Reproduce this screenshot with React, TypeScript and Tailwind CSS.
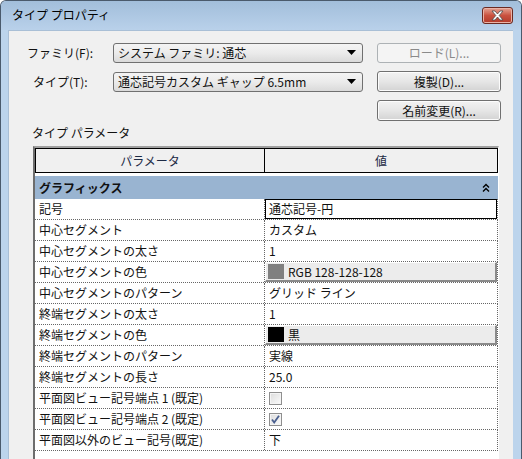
import React from 'react';

type Row = {
  name: string;
  value?: string;
  kind?: 'edit' | 'color' | 'check';
  swatch?: string;
  checked?: boolean;
};

const ROWS: Row[] = [
  { name: '記号', value: '通芯記号-円', kind: 'edit' },
  { name: '中心セグメント', value: 'カスタム' },
  { name: '中心セグメントの太さ', value: '1' },
  { name: '中心セグメントの色', value: 'RGB 128-128-128', kind: 'color', swatch: 'bg-[#808080]' },
  { name: '中心セグメントのパターン', value: 'グリッド ライン' },
  { name: '終端セグメントの太さ', value: '1' },
  { name: '終端セグメントの色', value: '黒', kind: 'color', swatch: 'bg-black' },
  { name: '終端セグメントのパターン', value: '実線' },
  { name: '終端セグメントの長さ', value: '25.0' },
  { name: '平面図ビュー記号端点 1 (既定)', kind: 'check', checked: false },
  { name: '平面図ビュー記号端点 2 (既定)', kind: 'check', checked: true },
  { name: '平面図以外のビュー記号(既定)', value: '下' },
];

function Combo({ text }: { text: string }) {
  return (
    <div className="flex h-[20px] w-[250px] items-center justify-between rounded-[3px] border border-[#707070] bg-gradient-to-b from-[#f4f4f4] via-[#ebebeb] to-[#dadada] pl-[4px] pr-[6px]">
      <span className="whitespace-nowrap">{text}</span>
      <svg width="9" height="5" viewBox="0 0 9 5">
        <path d="M0 0h9L4.5 5z" fill="#000" />
      </svg>
    </div>
  );
}

function Button({ text, disabled }: { text: string; disabled?: boolean }) {
  return (
    <div
      className={
        disabled
          ? 'flex h-[20px] w-[124px] items-center justify-center rounded-[3px] border border-[#adb2b5] bg-[#f4f4f4] text-[#8a8a8a]'
          : 'flex h-[21px] w-[124px] items-center justify-center rounded-[3px] border border-[#707070] bg-gradient-to-b from-[#f2f2f2] via-[#e6e6e6] to-[#d3d3d3] shadow-[inset_0_0_0_1px_#fcfcfc]'
      }
    >
      {text}
    </div>
  );
}

function Checkbox({ checked }: { checked?: boolean }) {
  return (
    <div className="flex h-[13px] w-[13px] items-center justify-center border border-[#8f8f8f] bg-gradient-to-br from-[#dcdcdc] to-[#fbfbfb] shadow-[inset_0_0_0_1px_#f4f4f4]">
      {checked && (
        <svg width="9" height="9" viewBox="0 0 9 9">
          <path d="M1 4.5l2.2 3L8 0.8" fill="none" stroke="#4a5f8f" strokeWidth="1.8" />
        </svg>
      )}
    </div>
  );
}

function ValueCell({ row }: { row: Row }) {
  if (row.kind === 'edit') {
    return (
      <div className="flex h-full flex-1 items-center border border-black pl-[3px]">{row.value}</div>
    );
  }
  if (row.kind === 'color') {
    return (
      <div className="flex h-full flex-1 items-center gap-[4px] border-b-2 border-r-2 border-l border-t border-b-[#8a8a8a] border-r-[#8a8a8a] border-l-white border-t-white bg-[#ececec] pl-[2px]">
        <span className={`h-[15px] w-[16px] ${row.swatch}`} />
        <span>{row.value}</span>
      </div>
    );
  }
  if (row.kind === 'check') {
    return (
      <div className="flex h-full flex-1 items-center pl-[4px]">
        <Checkbox checked={row.checked} />
      </div>
    );
  }
  return <div className="flex h-full flex-1 items-center pl-[4px]">{row.value}</div>;
}

export default function App() {
  return (
    <div className="h-[459px] w-[522px] overflow-hidden bg-white font-['Noto_Sans_CJK_JP',sans-serif] text-[12px] leading-[14px] text-[#111]">
      <div className="flex h-[480px] flex-col rounded-t-[6px] border border-b-0 border-[#4a5a6c] bg-[#bcd4ec]">
        {/* title bar */}
        <div className="flex h-[29px] shrink-0 items-center justify-between rounded-t-[5px] bg-gradient-to-b from-[#a2bedb] to-[#b9d1ea] pl-[11px] pr-[8px]">
          <span className="pb-[2px] text-[12px] text-black">タイプ プロパティ</span>
          <div className="flex h-[17px] w-[31px] items-center justify-center rounded-[3px] border border-[#6b2a22] bg-gradient-to-b from-[#e3a394] via-[#c9513f] to-[#b23a2a] shadow-[inset_0_0_0_1px_#eab3a7]">
            <svg width="13" height="11" viewBox="0 0 13 11">
              <path
                d="M1 1h3l2.5 3L9 1h3L8.2 5.5 12 10H9L6.5 7 4 10H1l3.8-4.5z"
                fill="#fff"
                stroke="#4b4b4b"
                strokeWidth="0.8"
              />
            </svg>
          </div>
        </div>

        {/* client area */}
        <div className="ml-[7px] mr-[8px] flex flex-1 flex-col border-l border-t border-[#a9bfd6] bg-[#f0f0f0]">
          <div className="mt-[11px] flex items-center">
            <div className="w-[104px] pl-[18px]">ファミリ(F):</div>
            <Combo text="システム ファミリ: 通芯" />
            <div className="ml-[14px] mt-[1px]">
              <Button text="ロード(L)..." disabled />
            </div>
          </div>
          <div className="mt-[8px] flex items-center">
            <div className="w-[104px] pl-[24px]">タイプ(T):</div>
            <Combo text="通芯記号カスタム ギャップ 6.5mm" />
            <div className="ml-[14px]">
              <Button text="複製(D)..." />
            </div>
          </div>
          <div className="mt-[8px] flex">
            <div className="ml-[368px]">
              <Button text="名前変更(R)..." />
            </div>
          </div>

          <div className="mt-[5px] pl-[23px]">タイプ パラメータ</div>

          {/* parameter table */}
          <div className="ml-[24px] mt-[6px] w-[466px] flex-1 border-l-2 border-r border-t-2 border-l-[#6d6d6d] border-r-white border-t-[#a0a0a0] bg-white">
            <div className="flex h-[25px] border border-black bg-[#f0f0f0]">
              <div className="flex w-[229px] items-center justify-center border-r border-black text-[#1c2a44]">
                パラメータ
              </div>
              <div className="flex flex-1 items-center justify-center text-[#1c2a44]">値</div>
            </div>
            <div className="mt-[3px] flex h-[23px] items-center justify-between bg-[#99b4d1] pl-[4px] pr-[8px] font-bold">
              <span>グラフィックス</span>
              <svg width="8" height="10" viewBox="0 0 8 10">
                <path d="M1 4.5L4 1.5 7 4.5M1 8.5L4 5.5 7 8.5" fill="none" stroke="#000" strokeWidth="1.4" />
              </svg>
            </div>
            {ROWS.map((row) => (
              <div
                key={row.name}
                className="flex h-[21px] border-b border-r border-dotted border-[#666]"
              >
                <div className="flex w-[230px] shrink-0 items-center border-r border-dotted border-[#666] pl-[4px] whitespace-nowrap">
                  {row.name}
                </div>
                <ValueCell row={row} />
              </div>
            ))}
          </div>
        </div>
      </div>
    </div>
  );
}
